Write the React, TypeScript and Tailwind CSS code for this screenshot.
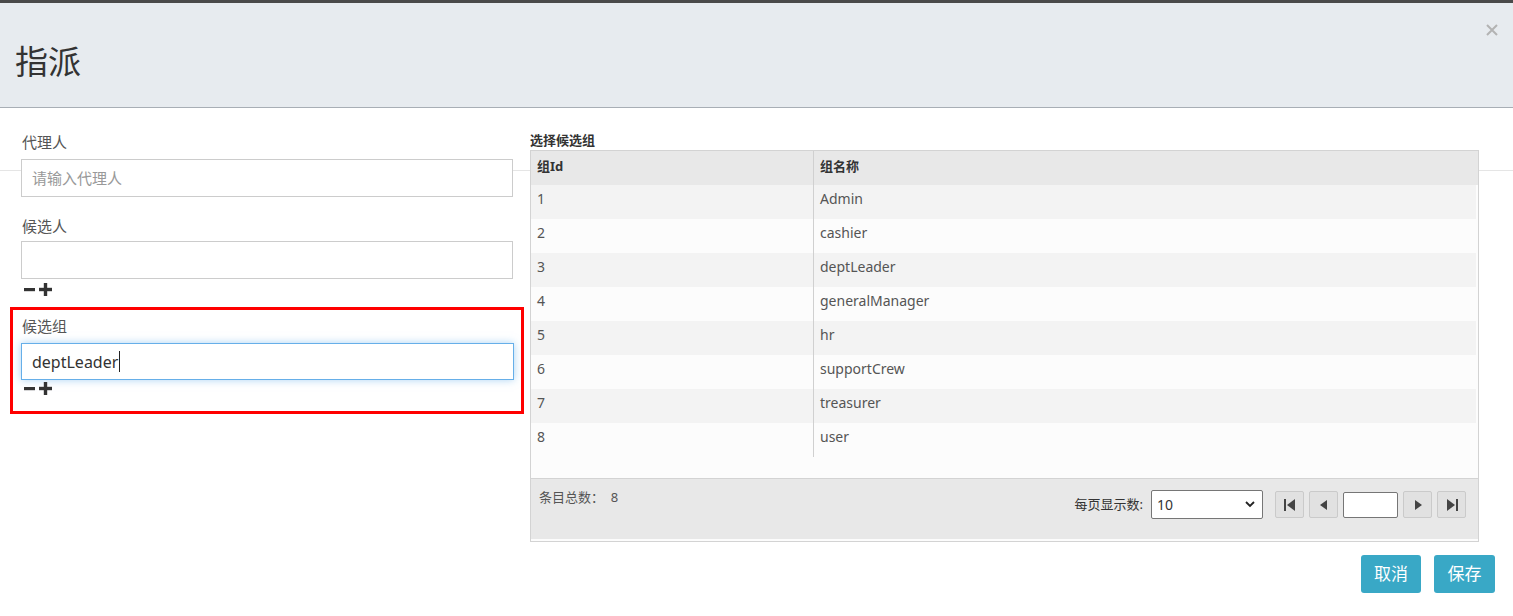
import React from "react";

const font = { fontFamily: '"Noto Sans", "Noto Sans CJK SC", sans-serif' };

const rows = [
    { id: "1", name: "Admin" },
    { id: "2", name: "cashier" },
    { id: "3", name: "deptLeader" },
    { id: "4", name: "generalManager" },
    { id: "5", name: "hr" },
    { id: "6", name: "supportCrew" },
    { id: "7", name: "treasurer" },
    { id: "8", name: "user" },
];

const MinusPlus = () => (
    <div className="flex items-center h-4 pl-[3px] gap-[4px]">
        <svg width="11" height="13" viewBox="0 0 11 13">
            <rect x="0" y="5" width="11" height="3.2" fill="#333" />
        </svg>
        <svg width="13" height="13" viewBox="0 0 13 13">
            <rect x="0" y="4.8" width="13" height="3.4" fill="#333" />
            <rect x="4.8" y="0" width="3.4" height="13" fill="#333" />
        </svg>
    </div>
);

const PagerBtn = ({ kind }: { kind: "first" | "prev" | "next" | "last" }) => (
    <div className="w-[29px] h-[27px] flex items-center justify-center bg-[#e1e1e1] border border-[#cacaca] rounded-[2px]">
        <svg width="14" height="12" viewBox="0 0 14 12">
            {kind === "first" && (
                <>
                    <rect x="1" y="0" width="2" height="12" fill="#444" />
                    <polygon points="12,0 12,12 4,6" fill="#444" />
                </>
            )}
            {kind === "prev" && <polygon points="10,1 10,11 3,6" fill="#444" />}
            {kind === "next" && <polygon points="4,1 4,11 11,6" fill="#444" />}
            {kind === "last" && (
                <>
                    <polygon points="2,0 2,12 10,6" fill="#444" />
                    <rect x="11" y="0" width="2" height="12" fill="#444" />
                </>
            )}
        </svg>
    </div>
);

export default function App() {
    return (
        <div className="w-full h-[616px] bg-white overflow-hidden border-t-[3px] border-[#4a4a4a]" style={font}>
            <div className="relative h-[105px] bg-[#e7ebef] border-b border-[#a8aeb5] pl-[15px] pt-[39px]">
                <h1 className="text-[33px] leading-[40px] text-[#333]">指派</h1>
                <svg className="absolute right-[15px] top-[21px]" width="12" height="12" viewBox="0 0 12 12">
                    <path d="M1 1 L11 11 M11 1 L1 11" stroke="#b3b3b3" strokeWidth="2" />
                </svg>
            </div>

            <div className="relative">
                <div className="absolute inset-x-0 top-[62px] h-px bg-[#e5e5e5]" />

                <div className="relative flex pl-[21px] gap-[17px]">
                    <div className="w-[492px] pt-[24px] text-[15px]">
                        <div className="h-5 leading-5 pl-px text-[#555]">代理人</div>
                        <div className="mt-[7px] h-[38px] bg-white border border-[#ccc] flex items-center pl-[10px] text-[#999]">
                            请输入代理人
                        </div>

                        <div className="mt-[19px] h-5 leading-5 pl-px text-[#555]">候选人</div>
                        <div className="mt-[5px] h-[38px] bg-white border border-[#ccc]" />
                        <div className="mt-[2px]">
                            <MinusPlus />
                        </div>

                        <div className="mt-[10px] -mx-[11px] border-[3px] border-[#ff0000] pl-[8px] pr-[7px] pt-[6px] pb-[15px]">
                            <div className="h-5 leading-5 pl-px text-[#555]">候选组</div>
                            <div className="mt-[7px] h-[37px] bg-white border border-[#66afe9] shadow-[0_0_8px_rgba(102,175,233,0.55)] flex items-center pl-[10px] text-[16px] text-[#333]">
                                deptLeader
                                <span className="inline-block w-px h-[21px] bg-[#222] ml-[1px]" />
                            </div>
                            <MinusPlus />
                        </div>
                    </div>

                    <div className="w-[949px] pt-[24px]">
                        <div className="h-4 leading-4 text-[13px] font-bold text-[#333]">选择候选组</div>
                        <div className="mt-[2px] border border-[#d3d3d3]">
                            <div className="flex h-[34px] bg-[#e8e8e8] text-[13px] leading-[20px] font-bold text-[#333]">
                                <div className="w-[283px] pt-[5px] pl-[6px] border-r border-[#d0d0d0]">组Id</div>
                                <div className="flex-1 pt-[5px] pl-[6px]">组名称</div>
                            </div>
                            <div className="bg-[#fcfcfc] h-[293px] pr-[2px]">
                                {rows.map((r, i) => (
                                    <div
                                        key={r.id}
                                        className={`flex h-[34px] text-[14px] leading-[20px] text-[#555] ${i % 2 === 0 ? "bg-[#f3f3f3]" : "bg-[#fcfcfc]"}`}
                                    >
                                        <div className="w-[283px] pt-[4px] pl-[6px] border-r border-[#d0d0d0]">{r.id}</div>
                                        <div className="flex-1 pt-[4px] pl-[6px]">{r.name}</div>
                                    </div>
                                ))}
                            </div>
                            <div className="h-[63px] bg-[#e8e8e8] border-t border-[#d3d3d3] border-b-[2px] border-b-[#fcfcfc] flex justify-between pt-[9px] pl-[8px] pr-[12px]">
                                <div className="text-[13px] leading-[18px] text-[#555]">条目总数：&nbsp;&nbsp;8</div>
                                <div className="flex items-center h-[29px] mt-[2px]">
                                    <span className="text-[13px] text-[#333] mr-[8px]">每页显示数:</span>
                                    <div className="w-[112px] h-[29px] bg-white border border-[#767676] rounded-[2px] flex items-center justify-between pl-[5px] pr-[7px] text-[14px] text-[#333]">
                                        <span>10</span>
                                        <svg width="10" height="7" viewBox="0 0 10 7">
                                            <path d="M1 1 L5 5 L9 1" stroke="#222" strokeWidth="1.8" fill="none" />
                                        </svg>
                                    </div>
                                    <div className="flex items-center gap-[5px] ml-[12px]">
                                        <PagerBtn kind="first" />
                                        <PagerBtn kind="prev" />
                                        <div className="w-[55px] h-[26px] bg-white border border-[#767676] rounded-[2px]" />
                                        <PagerBtn kind="next" />
                                        <PagerBtn kind="last" />
                                    </div>
                                </div>
                            </div>
                        </div>
                    </div>
                </div>

                <div className="flex justify-end gap-[13px] pr-[18px] mt-[13px]">
                    <button className="w-[60px] h-[38px] bg-[#39a8c6] rounded-[3px] text-white text-[17px]">取消</button>
                    <button className="w-[61px] h-[38px] bg-[#39a8c6] rounded-[3px] text-white text-[17px]">保存</button>
                </div>
            </div>
        </div>
    );
}
